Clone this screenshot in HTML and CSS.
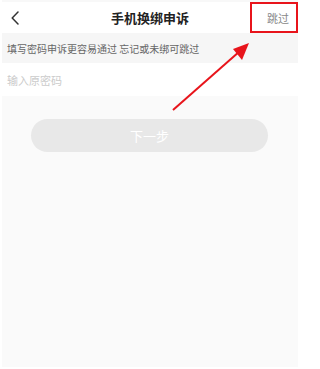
FILE: index.html
```html
<!DOCTYPE html>
<html lang="en">
<head>
<meta charset="utf-8">
<link rel="stylesheet" href="styles.css">
</head>
<body>
<div class="screen">
  <div class="status"></div>
  <div class="nav">
    <svg class="back" width="8" height="14" viewBox="0 0 8 14"><path d="M7 1 L1.2 7 L7 13" fill="none" stroke="#333" stroke-width="1.5" stroke-linecap="round" stroke-linejoin="round"/></svg>
    <div class="title">手机换绑申诉</div>
    <div class="skip">跳过</div>
  </div>
  <div class="tip">填写密码申诉更容易通过 忘记或未绑可跳过</div>
  <div class="field">输入原密码</div>
  <div class="content">
    <div class="btn">下一步</div>
  </div>
  <svg class="annot" width="300" height="369" viewBox="0 0 300 369">
    <rect x="251" y="3" width="46" height="29" fill="none" stroke="#e8141b" stroke-width="2"/>
    <line x1="173" y1="110" x2="240" y2="51" stroke="#e8141b" stroke-width="2"/>
    <polygon points="249,43 233,49 242,60" fill="#e8141b"/>
  </svg>
</div>
</body>
</html>
```
FILE: styles.css
```css
html, body {
  margin: 0;
  padding: 0;
  background: #fff;
}
.screen {
  position: relative;
  width: 300px;
  height: 369px;
  box-sizing: border-box;
  padding: 0 2px 2px 2px;
  display: flex;
  flex-direction: column;
  font-family: "Noto Sans CJK SC", "Noto Sans", sans-serif;
}
.status {
  height: 2px;
  background: #f8f8f8;
}
.nav {
  height: 31px;
  background: #fff;
  display: flex;
  align-items: center;
  position: relative;
  padding: 0 9px 0 9px;
}
.back {
  display: block;
  margin-top: 1px;
}
.title {
  position: absolute;
  left: 0;
  right: 0;
  text-align: center;
  font-size: 13px;
  font-weight: 700;
  color: #222;
  line-height: 31px;
  pointer-events: none;
}
.skip {
  margin-left: auto;
  font-size: 11px;
  color: #888;
}
.tip {
  height: 30px;
  background: #f6f6f6;
  display: flex;
  align-items: center;
  padding-left: 5px;
  font-size: 10px;
  color: #666;
}
.field {
  height: 33px;
  background: #fff;
  display: flex;
  align-items: center;
  padding-left: 5px;
  font-size: 11px;
  color: #cbcbcb;
}
.content {
  flex: 1;
  background: #fafafa;
  padding-top: 23px;
}
.btn {
  margin-left: 29px;
  width: 237px;
  height: 33px;
  border-radius: 17px;
  background: #e8e8e8;
  color: #fff;
  font-size: 13px;
  display: flex;
  align-items: center;
  justify-content: center;
}
.annot {
  position: absolute;
  left: 0;
  top: 0;
  pointer-events: none;
}
```
